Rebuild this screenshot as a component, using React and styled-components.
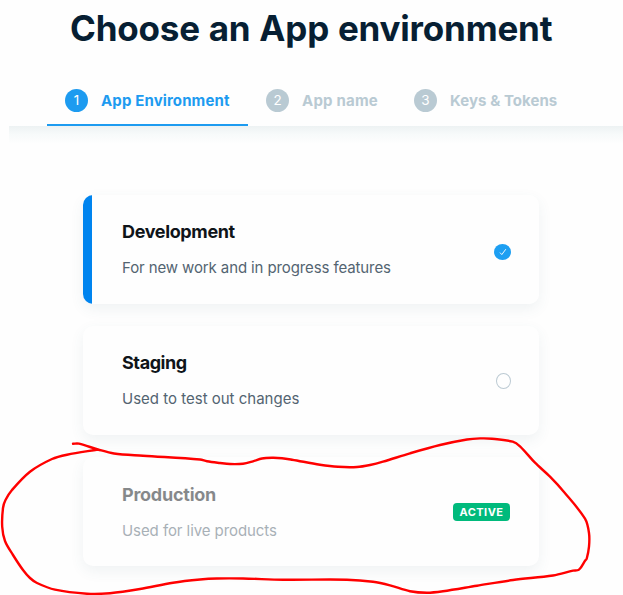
import React from "react";
import styled, { createGlobalStyle } from "styled-components";

const GlobalStyle = createGlobalStyle`
  * { box-sizing: border-box; }
  html, body { margin: 0; padding: 0; background: #fefefe; overflow: hidden; }
  body { font-family: "Inter", "Liberation Sans", sans-serif; }
`;

const Page = styled.main`
  position: relative;
  width: 623px;
  height: 595px;
  overflow: hidden;
`;

const Title = styled.h1`
  margin: 0;
  padding: 7px 0 0 70px;
  height: 76px;
  font-size: 35px;
  line-height: 43px;
  font-weight: 700;
  letter-spacing: -0.2px;
  word-spacing: 0.8px;
  color: #071f33;
  white-space: nowrap;
`;

const Steps = styled.nav`
  display: flex;
  margin-left: 9px;
  padding-left: 38px;
  height: 50px;
  background: #fefefe;
`;

const Step = styled.div`
  display: flex;
  align-items: center;
  gap: 13px;
  flex: 0 0 ${(p) => p.$width}px;
  padding: 0 0 ${(p) => (p.$active ? 0 : 2)}px 18px;
  color: ${(p) => (p.$active ? "#1d9bf0" : "#b9cad3")};
  border-bottom: ${(p) => (p.$active ? "2px solid #1d9bf0" : "0")};
`;

const StepNumber = styled.span`
  display: grid;
  place-items: center;
  width: 23px;
  height: 23px;
  flex: none;
  border-radius: 50%;
  background: currentColor;

  span {
    color: #fff;
    font-size: 13.5px;
    line-height: 23px;
  }
`;

const StepLabel = styled.span`
  padding-top: 2px;
  font-size: 15px;
  line-height: 20px;
  font-weight: 700;
  letter-spacing: ${(p) => p.$tracking}px;
  white-space: nowrap;
`;

const StepShadow = styled.div`
  height: 18px;
  margin-left: 9px;
  background: linear-gradient(#edf2f3, #f7fafa 45%, #fefefe);
`;

const Cards = styled.section`
  display: flex;
  flex-direction: column;
  gap: 22px;
  width: 456px;
  margin: 51px 0 0 83px;
`;

const Card = styled.article`
  display: flex;
  align-items: center;
  justify-content: space-between;
  height: 109px;
  padding: 0 ${(p) => (p.$wide ? 29 : 28)}px 0 39px;
  border-radius: 10px;
  background: ${(p) =>
    p.$selected ? "linear-gradient(90deg, #0084ef 9px, #fefefe 9px)" : "#fefefe"};
  box-shadow: 0 5px 14px rgba(70, 105, 120, 0.08);
`;

const CardText = styled.div`
  display: flex;
  flex-direction: column;
  gap: 12px;
  padding-top: ${(p) => (p.$disabled ? 2 : 0)}px;
  opacity: ${(p) => (p.$disabled ? 0.5 : 1)};
`;

const CardTitle = styled.h2`
  margin: 0;
  font-size: 18px;
  line-height: 24px;
  font-weight: 700;
  letter-spacing: ${(p) => p.$tracking}px;
  color: #0f1419;
  white-space: nowrap;
`;

const CardDescription = styled.p`
  margin: 0;
  font-size: 15px;
  line-height: 24px;
  letter-spacing: ${(p) => p.$tracking}px;
  color: #536471;
  white-space: nowrap;
`;

const Checked = styled.span`
  display: grid;
  place-items: center;
  width: 17px;
  height: 16px;
  margin-top: 5px;
  border-radius: 50%;
  background: #1d9ff2;
`;

const Unchecked = styled.span`
  width: 15px;
  height: 16px;
  border: 1px solid #bccad3;
  border-radius: 50%;
`;

const Badge = styled.span`
  display: grid;
  place-items: center;
  width: 57px;
  height: 18px;
  border-radius: 4px;
  background: #00ba7c;
  color: #fff;
  font-size: 11px;
  line-height: 18px;
  font-weight: 700;
  letter-spacing: 0.45px;
`;

const Annotation = styled.svg`
  position: absolute;
  inset: 0;
  pointer-events: none;
`;

const steps = [
  { label: "App Environment", width: 201, tracking: 0.13, active: true },
  { label: "App name", width: 148, tracking: 0.2 },
  { label: "Keys & Tokens", width: 180, tracking: 0.06 },
];

const strokePoints = [
  [73, 443.7], [79, 443.7], [98, 449.5], [114, 453.5], [143, 455.7], [200, 459.5],
  [207, 461.3], [220, 463], [230, 464], [243, 463.7], [253, 461.3], [262, 458.5],
  [272, 457.8], [282, 458.2], [292, 459.7], [320, 464.7], [338, 466.8], [357, 467],
  [370, 465], [383, 461.7], [410, 453.3], [440, 445], [467, 439.5], [480, 438.4],
  [492, 438.7], [512.7, 441.7], [520, 446.3], [535, 462.7], [550, 476.7], [564, 492],
  [585, 518.7], [589, 533], [589, 546.7], [586.7, 558.7], [585.2, 560.5], [579, 569.7],
  [573, 570.7], [553, 575.5], [513, 580], [477, 585.7], [443, 591.2], [427, 592.7],
  [410, 591.2], [390, 585.3], [373, 581.7], [347, 579.7], [283, 579.7], [243, 578.5],
  [217, 578.5], [200, 579.5], [173, 582.7], [140, 589], [110, 593.2], [87, 593.7],
  [55, 589.7], [37, 583], [30, 578], [23, 570], [13, 555], [5, 541], [2.2, 526.7],
  [3, 508], [5.5, 500], [12, 490], [30, 471.7], [52, 459], [67, 454.7], [98, 449.5],
];

function smoothPath(points) {
  const at = (i) => points[Math.max(0, Math.min(points.length - 1, i))];
  let d = `M${points[0].join(" ")}`;
  for (let i = 0; i < points.length - 1; i += 1) {
    const [a, b, c, e] = [at(i - 1), at(i), at(i + 1), at(i + 2)];
    const span = Math.hypot(c[0] - b[0], c[1] - b[1]);
    const handle = (from, to) => {
      const length = Math.hypot(to[0] - from[0], to[1] - from[1]) || 1;
      return [((to[0] - from[0]) / length) * span * 0.33, ((to[1] - from[1]) / length) * span * 0.33];
    };
    const h1 = handle(a, c);
    const h2 = handle(b, e);
    d += `C${b[0] + h1[0]} ${b[1] + h1[1]} ${c[0] - h2[0]} ${c[1] - h2[1]} ${c[0]} ${c[1]}`;
  }
  return d;
}

export default function App() {
  return (
    <Page>
      <GlobalStyle />
      <Title>Choose an App environment</Title>
      <Steps>
        {steps.map((step, index) => (
          <Step key={step.label} $width={step.width} $active={step.active}>
            <StepNumber><span>{index + 1}</span></StepNumber>
            <StepLabel $tracking={step.tracking}>{step.label}</StepLabel>
          </Step>
        ))}
      </Steps>
      <StepShadow />
      <Cards>
        <Card $selected>
          <CardText>
            <CardTitle $tracking={-0.36}>Development</CardTitle>
            <CardDescription $tracking={-0.11}>For new work and in progress features</CardDescription>
          </CardText>
          <Checked>
            <svg width="8" height="8" viewBox="0 0 8 8" fill="none">
              <path d="M1 4.6 2.8 6.6 6.8 1.2" stroke="#fff" strokeWidth="0.9" />
            </svg>
          </Checked>
        </Card>
        <Card>
          <CardText>
            <CardTitle $tracking={-0.42}>Staging</CardTitle>
            <CardDescription $tracking={0}>Used to test out changes</CardDescription>
          </CardText>
          <Unchecked />
        </Card>
        <Card $wide>
          <CardText $disabled>
            <CardTitle $tracking={-0.24}>Production</CardTitle>
            <CardDescription $tracking={-0.07}>Used for live products</CardDescription>
          </CardText>
          <Badge>ACTIVE</Badge>
        </Card>
      </Cards>
      <Annotation width="623" height="595" viewBox="0 0 623 595" fill="none">
        <path d={smoothPath(strokePoints)} stroke="#f00" strokeWidth="2.4" strokeLinecap="round" strokeLinejoin="round" />
      </Annotation>
    </Page>
  );
}
